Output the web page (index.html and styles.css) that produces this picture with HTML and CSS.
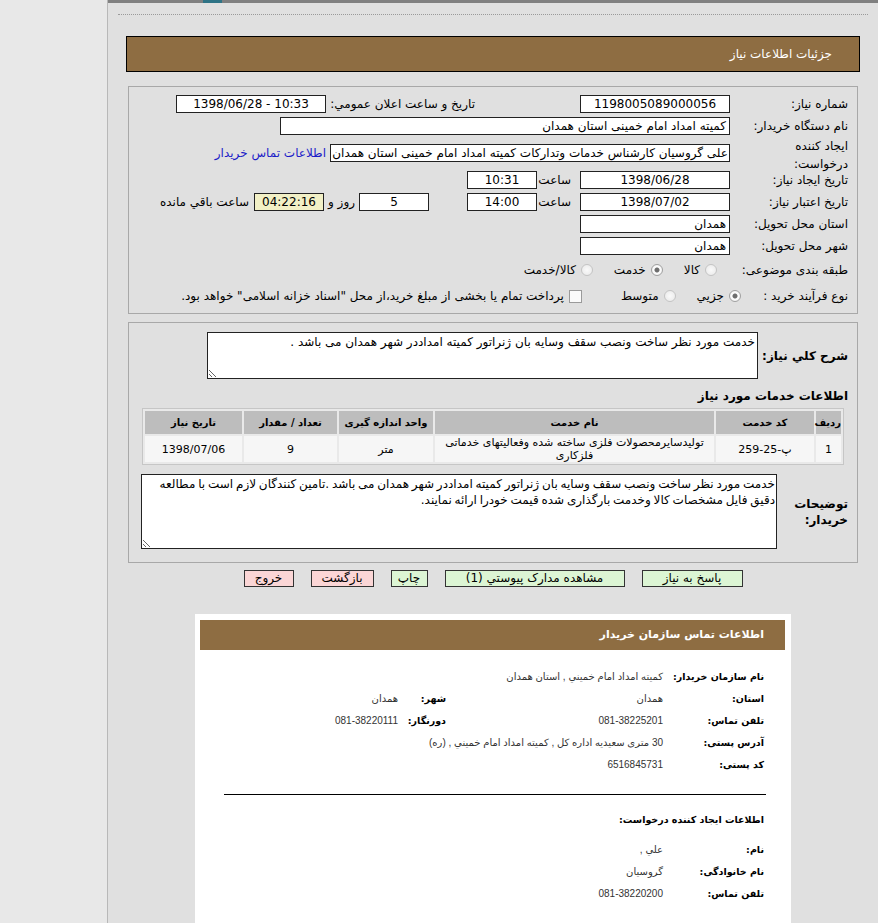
FILE: index.html
```html
<!DOCTYPE html>
<html lang="fa">
<head>
    <meta charset="utf-8">
    <title>جزئیات اطلاعات نیاز</title>
    <link rel="stylesheet" href="styles.css">
</head>
<body>
<div class="page">
    <div class="side"></div>

    <div class="main" dir="rtl">
        <div class="topbar"><span></span></div>
        <div class="dots"></div>

        <div class="title-bar">جزئیات اطلاعات نیاز</div>

        <!-- Need details -->
        <div class="box form-box">
            <div class="row">
                <div class="lbl">شماره نیاز:</div>
                <div class="field w150 center">1198005089000056</div>
                <div class="lbl-pub">تاریخ و ساعت اعلان عمومي:</div>
                <div class="field w150 center" dir="ltr">1398/06/28 - 10:33</div>
            </div>
            <div class="row">
                <div class="lbl">نام دستگاه خریدار:</div>
                <div class="field w450">کمیته امداد امام خمینی استان همدان</div>
            </div>
            <div class="row tall">
                <div class="lbl two-line">ایجاد کننده<br>درخواست:</div>
                <div class="field w400">علی گروسیان کارشناس خدمات وتدارکات کمیته امداد امام خمینی استان همدان</div>
                <a class="contact-link" href="#">اطلاعات تماس خریدار</a>
            </div>
            <div class="row">
                <div class="lbl">تاریخ ایجاد نیاز:</div>
                <div class="field w150 center">1398/06/28</div>
                <div class="lbl-time">ساعت</div>
                <div class="field w70 center">10:31</div>
            </div>
            <div class="row">
                <div class="lbl">تاریخ اعتبار نیاز:</div>
                <div class="field w150 center">1398/07/02</div>
                <div class="lbl-time">ساعت</div>
                <div class="field w70 center">14:00</div>
                <div class="field w70 center days">5</div>
                <div class="lbl-days">روز و</div>
                <div class="field w70 center remain">04:22:16</div>
                <div class="lbl-remain">ساعت باقي مانده</div>
            </div>
            <div class="row">
                <div class="lbl">استان محل تحویل:</div>
                <div class="field w150">همدان</div>
            </div>
            <div class="row">
                <div class="lbl">شهر محل تحویل:</div>
                <div class="field w150">همدان</div>
            </div>
            <div class="row opts">
                <div class="lbl-cat">طبقه بندی موضوعی:</div>
                <span class="radio"></span><span class="opt">کالا</span>
                <span class="radio on"></span><span class="opt">خدمت</span>
                <span class="radio"></span><span class="opt">کالا/خدمت</span>
            </div>
            <div class="row opts">
                <div class="lbl-proc">نوع فرآیند خرید :</div>
                <span class="radio on"></span><span class="opt">جزيي</span>
                <span class="radio"></span><span class="opt">متوسط</span>
                <span class="check"></span><span class="opt">پرداخت تمام یا بخشی از مبلغ خرید،از محل "اسناد خزانه اسلامی" خواهد بود.</span>
            </div>
        </div>

        <!-- Description and services -->
        <div class="box desc-box">
            <div class="desc-row">
                <div class="lbl-bold lbl-desc">شرح کلي نیاز:</div>
                <textarea class="area area-short" readonly>خدمت مورد نظر ساخت ونصب سقف وسایه بان ژنراتور کمیته امداددر شهر همدان می باشد .</textarea>
            </div>

            <h3 class="sub-title">اطلاعات خدمات مورد نیاز</h3>

            <table class="services">
                <tr>
                    <th class="col-row">ردیف</th>
                    <th class="col-code">کد خدمت</th>
                    <th class="col-name">نام خدمت</th>
                    <th class="col-unit">واحد اندازه گیری</th>
                    <th class="col-qty">تعداد / مقدار</th>
                    <th class="col-date">تاریخ نیاز</th>
                </tr>
                <tr>
                    <td>1</td>
                    <td>پ-25-259</td>
                    <td>تولیدسایرمحصولات فلزی ساخته شده وفعالیتهای خدماتی فلزکاری</td>
                    <td>متر</td>
                    <td>9</td>
                    <td>1398/07/06</td>
                </tr>
            </table>

            <div class="desc-row notes-row">
                <div class="lbl-bold lbl-notes">توضیحات<br>خریدار:</div>
                <textarea class="area area-long" readonly>خدمت مورد نظر ساخت ونصب سقف وسایه بان ژنراتور کمیته امداددر شهر همدان می باشد .تامین کنندگان لازم است با مطالعه دقیق فایل مشخصات کالا وخدمت بارگذاری شده قیمت خودرا ارائه نمایند.</textarea>
            </div>
        </div>

        <div class="buttons">
            <a class="btn green b-reply" href="#">پاسخ به نیاز</a>
            <a class="btn green b-docs" href="#">مشاهده مدارک پیوستي (1)</a>
            <a class="btn green b-print" href="#">چاپ</a>
            <a class="btn pink b-back" href="#">بازگشت</a>
            <a class="btn pink b-exit" href="#">خروج</a>
        </div>

        <!-- Buyer contact -->
        <div class="contact">
            <div class="contact-head">اطلاعات تماس سازمان خریدار</div>
            <div class="c-rows">
                <div class="c-row">
                    <div class="c-lbl">نام سازمان خریدار:</div>
                    <div class="c-val">کمیته امداد امام خميني , استان همدان</div>
                </div>
                <div class="c-row">
                    <div class="c-lbl">استان:</div>
                    <div class="c-val c-half">همدان</div>
                    <div class="c-lbl2">شهر:</div>
                    <div class="c-val">همدان</div>
                </div>
                <div class="c-row">
                    <div class="c-lbl">تلفن تماس:</div>
                    <div class="c-val c-half">081-38225201</div>
                    <div class="c-lbl2">دورنگار:</div>
                    <div class="c-val">081-38220111</div>
                </div>
                <div class="c-row">
                    <div class="c-lbl">آدرس پستی:</div>
                    <div class="c-val">30 متری سعیدیه اداره کل , کمیته امداد امام خميني , (ره)</div>
                </div>
                <div class="c-row">
                    <div class="c-lbl">کد پستی:</div>
                    <div class="c-val">6516845731</div>
                </div>
            </div>

            <hr class="c-line">

            <div class="c-sub">اطلاعات ایجاد کننده درخواست:</div>
            <div class="c-rows">
                <div class="c-row">
                    <div class="c-lbl">نام:</div>
                    <div class="c-val">علي ,</div>
                </div>
                <div class="c-row">
                    <div class="c-lbl">نام خانوادگی:</div>
                    <div class="c-val">گروسیان</div>
                </div>
                <div class="c-row">
                    <div class="c-lbl">تلفن تماس:</div>
                    <div class="c-val">081-38220200</div>
                </div>
            </div>
        </div>
    </div>
</div>
</body>
</html>
```

FILE: styles.css
```css
body {
    margin: 0;
    background: #e0e0e0;
    font-family: "DejaVu Sans", sans-serif;
    font-size: 12px;
    color: #000;
}
.page {
    display: flex;
    min-height: 923px;
}
.side {
    flex: none;
    width: 107px;
    background: #e8e8e8;
    border-right: 1px solid #b8b8b8;
}
.main {
    flex: 1;
    min-width: 0;
}
.topbar {
    height: 3px;
    background: #808080;
    direction: ltr;
}
.topbar span {
    display: block;
    width: 19px;
    height: 3px;
    margin-left: 95px;
    background: #2f7486;
}
.dots {
    margin: 11px 10px 0;
    border-top: 1px dotted #9a9a9a;
}
.title-bar {
    margin: 21px 18px 0;
    height: 34px;
    line-height: 34px;
    padding-right: 27px;
    background: #8e6d42;
    border: 1px solid #000;
    color: #fff;
    font-size: 12px;
}
.box {
    margin: 14px 20px 0;
    border: 1px solid #a8a8a8;
}
.form-box {
    padding: 6px 0 4px;
}
.row {
    display: flex;
    align-items: center;
    height: 22px;
}
.row.tall {
    height: 32px;
}
.row.opts {
    height: 26px;
}
.lbl {
    flex: none;
    width: 118px;
    padding-right: 9px;
    line-height: 15px;
}
.two-line {
    line-height: 18px;
    padding-top: 4px;
}
.lbl-cat {
    flex: none;
    width: 131px;
    padding-right: 9px;
    white-space: nowrap;
}
.lbl-proc {
    flex: none;
    width: 107px;
    padding-right: 9px;
    white-space: nowrap;
}
.field {
    flex: none;
    box-sizing: border-box;
    height: 18px;
    line-height: 16px;
    padding: 0 3px;
    background: #fff;
    border: 1px solid #222;
    white-space: nowrap;
    overflow: hidden;
}
.center {
    text-align: center;
}
.w150 { width: 150px; }
.w450 { width: 450px; }
.w400 { width: 400px; padding: 0 1px; }
.w70 { width: 70px; }
.lbl-pub {
    flex: none;
    width: 145px;
    margin-right: 105px;
    padding-left: 4px;
}
.contact-link {
    margin-right: 4px;
    color: #1c1cc8;
    text-decoration: none;
    white-space: nowrap;
}
.lbl-time {
    flex: none;
    width: 34px;
    padding-right: 9px;
    white-space: nowrap;
}
.days {
    margin-right: 38px;
}
.lbl-days {
    flex: none;
    width: 31px;
    padding-right: 4px;
    white-space: nowrap;
}
.remain {
    background: #f2f0c6;
}
.lbl-remain {
    margin-right: 5px;
    white-space: nowrap;
}
.radio {
    flex: none;
    box-sizing: border-box;
    width: 12px;
    height: 12px;
    border-radius: 50%;
    border: 1px solid #c4c4c4;
    background: radial-gradient(circle, #fafafa 0, #e8e8e8 100%);
}
.radio.on {
    border-color: #a0a0a0;
    background: radial-gradient(circle, #6e6e6e 0, #6e6e6e 2px, #fff 3px, #e6e6e6 100%);
}
.check {
    flex: none;
    box-sizing: border-box;
    width: 13px;
    height: 13px;
    margin-right: 18px;
    border: 1px solid #9a9a9a;
    background: #fafafa;
}
.opt {
    margin: 0 5px 0 21px;
    white-space: nowrap;
}
.desc-box {
    margin-top: 8px;
    padding: 9px 0 13px;
}
.desc-row {
    display: flex;
    align-items: center;
}
.lbl-bold {
    flex: none;
    padding-right: 9px;
    font-weight: bold;
    font-size: 12px;
    line-height: 16px;
    white-space: nowrap;
}
.lbl-desc {
    width: 90px;
}
.area {
    box-sizing: border-box;
    display: block;
    border: 1px solid #222;
    background: #fff;
    font-family: "DejaVu Sans", sans-serif;
    font-size: 12px;
    line-height: 16px;
    padding: 1px 2px;
    margin: 0;
    color: #000;
    resize: both;
    overflow: hidden;
}
.area-short {
    width: 551px;
    height: 47px;
}
.sub-title {
    margin: 8px 9px 3px 0;
    font-size: 12px;
    line-height: 18px;
}
.services {
    width: 702px;
    margin-right: 13px;
    table-layout: fixed;
    border: 1px solid #c6c6c6;
    border-spacing: 2px;
    background: #e9e9e9;
}
.services th {
    height: 23px;
    padding: 0;
    background: #bdbdbd;
    font-size: 10px;
    font-weight: bold;
}
.services td {
    height: 26px;
    padding: 0 1px;
    background: #f6f6f6;
    text-align: center;
    font-size: 11px;
    line-height: 13px;
}
.col-row { width: 25px; }
.col-code { width: 98px; }
.col-name { width: 279px; }
.col-unit { width: 94px; }
.col-qty { width: 93px; }
.col-date { width: 97px; }
.notes-row {
    margin-top: 9px;
}
.lbl-notes {
    width: 71px;
    white-space: normal;
}
.area-long {
    width: 636px;
    height: 75px;
    padding: 1px 1px;
    word-spacing: -1px;
}
.buttons {
    display: flex;
    justify-content: center;
    gap: 17px;
    margin-top: 7px;
}
.btn {
    box-sizing: border-box;
    height: 17px;
    line-height: 15px;
    border: 1px solid #333;
    color: #000;
    text-decoration: none;
    text-align: center;
    font-size: 12px;
}
.green { background: #dcf5d4; }
.pink { background: #fbd6d6; }
.b-reply { width: 101px; }
.b-docs { width: 180px; }
.b-print { width: 37px; }
.b-back { width: 63px; }
.b-exit { width: 50px; }
.contact {
    width: 596px;
    margin: 27px auto 0;
    padding: 6px 6px 20px 5px;
    box-sizing: border-box;
    background: #fff;
    color: #333;
    font-family: "Liberation Sans", "DejaVu Sans", sans-serif;
    font-size: 10px;
}
.contact-head {
    height: 30px;
    line-height: 30px;
    padding-right: 21px;
    background: #8e6d42;
    color: #fff;
    font-family: "DejaVu Sans", sans-serif;
    font-weight: bold;
    font-size: 11px;
}
.c-rows {
    padding: 15px 21px 0 0;
}
.c-row {
    display: flex;
    height: 22px;
    align-items: center;
}
.c-lbl,
.c-lbl2,
.c-sub {
    font-family: "DejaVu Sans", sans-serif;
    font-weight: bold;
    font-size: 9.5px;
    color: #000;
}
.c-lbl {
    flex: none;
    width: 101px;
}
.c-val {
    white-space: nowrap;
}
.c-half {
    flex: none;
    width: 217px;
}
.c-lbl2 {
    flex: none;
    width: 48px;
}
.c-line {
    margin: 19px 19px 0 24px;
    border: 0;
    border-top: 1px solid #000;
}
.c-sub {
    margin-top: 19px;
    padding-right: 21px;
}
.c-sub + .c-rows {
    padding-top: 13px;
}
```
